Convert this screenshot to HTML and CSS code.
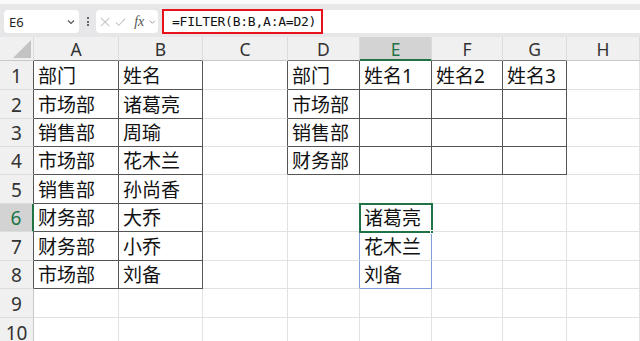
FILE: index.html
```html
<!DOCTYPE html>
<html lang="zh">
<head>
<meta charset="utf-8">
<link rel="stylesheet" href="styles.css">
</head>
<body>
<div class="topstrip"></div>
<div class="toolbar">
  <div class="namebox">
    <span class="name">E6</span>
    <svg class="chev" width="8" height="6" viewBox="0 0 8 6"><path d="M1 1.5 L4 4.5 L7 1.5" fill="none" stroke="#555" stroke-width="1.2"/></svg>
  </div>
  <div class="dots"><i></i><i></i><i></i></div>
  <div class="btns">
    <svg width="12" height="12" viewBox="0 0 12 12"><path d="M1 1 L11 11 M11 1 L1 11" stroke="#c4c4c4" stroke-width="1.2" fill="none"/></svg>
    <svg width="13" height="12" viewBox="0 0 13 12"><path d="M1 6.5 L4.5 10 L12 2" stroke="#c4c4c4" stroke-width="1.2" fill="none"/></svg>
    <span class="fx">fx</span>
    <svg width="8" height="6" viewBox="0 0 8 6"><path d="M1 1.5 L4 4.5 L7 1.5" fill="none" stroke="#999" stroke-width="1.1"/></svg>
  </div>
  <div class="fbar">
    <span class="formula">=FILTER(B:B,A:A=D2)</span>
  </div>
</div>
<div class="sheet">
  <div class="c corner"><svg width="20" height="20" viewBox="0 0 20 20"><path d="M19 1 L19 19 L1 19 Z" fill="#c3c3c3"/></svg></div>
  <div class="c hd tb">A</div><div class="c hd tb">B</div><div class="c hd">C</div><div class="c hd tb">D</div><div class="c hd selcol">E</div><div class="c hd tb">F</div><div class="c hd tb">G</div><div class="c hd">H</div>

  <div class="c rh tr">1</div><div class="c t">部门</div><div class="c t">姓名</div><div class="c tr"></div><div class="c t">部门</div><div class="c t">姓名1</div><div class="c t">姓名2</div><div class="c t">姓名3</div><div class="c"></div>

  <div class="c rh tr">2</div><div class="c t">市场部</div><div class="c t">诸葛亮</div><div class="c tr"></div><div class="c t">市场部</div><div class="c t"></div><div class="c t"></div><div class="c t"></div><div class="c"></div>

  <div class="c rh tr">3</div><div class="c t">销售部</div><div class="c t">周瑜</div><div class="c tr"></div><div class="c t">销售部</div><div class="c t"></div><div class="c t"></div><div class="c t"></div><div class="c"></div>

  <div class="c rh tr">4</div><div class="c t">市场部</div><div class="c t">花木兰</div><div class="c tr"></div><div class="c t">财务部</div><div class="c t"></div><div class="c t"></div><div class="c t"></div><div class="c"></div>

  <div class="c rh tr">5</div><div class="c t">销售部</div><div class="c t">孙尚香</div><div class="c"></div><div class="c"></div><div class="c"></div><div class="c"></div><div class="c"></div><div class="c"></div>

  <div class="c rh selrow">6</div><div class="c t">财务部</div><div class="c t">大乔</div><div class="c"></div><div class="c"></div><div class="c active">诸葛亮</div><div class="c"></div><div class="c"></div><div class="c"></div>

  <div class="c rh tr">7</div><div class="c t">财务部</div><div class="c t">小乔</div><div class="c"></div><div class="c bl"></div><div class="c spill">花木兰</div><div class="c"></div><div class="c"></div><div class="c"></div>

  <div class="c rh tr">8</div><div class="c t">市场部</div><div class="c t">刘备</div><div class="c"></div><div class="c bl"></div><div class="c spill end">刘备</div><div class="c"></div><div class="c"></div><div class="c"></div>

  <div class="c rh">9</div><div class="c"></div><div class="c"></div><div class="c"></div><div class="c"></div><div class="c"></div><div class="c"></div><div class="c"></div><div class="c"></div>

  <div class="c rh">10</div><div class="c"></div><div class="c"></div><div class="c"></div><div class="c"></div><div class="c"></div><div class="c"></div><div class="c"></div><div class="c"></div>
</div>
</body>
</html>
```
FILE: styles.css
```css
html, body {
  margin: 0;
  padding: 0;
  width: 640px;
  height: 341px;
  overflow: hidden;
  background: #fff;
  font-family: "Noto Sans", "Noto Sans CJK SC", sans-serif;
}

.topstrip {
  height: 4px;
  background: #fafafa;
}

.toolbar {
  height: 33px;
  box-sizing: border-box;
  padding: 6px 0 4px 4px;
  background: #e7e7e9;
  display: flex;
  align-items: stretch;
}

.namebox {
  width: 75px;
  background: #fff;
  border-radius: 4px;
  display: flex;
  align-items: center;
  justify-content: space-between;
  padding: 0 4px 0 5px;
  box-sizing: border-box;
}

.name {
  font-size: 13px;
  color: #222;
}

.dots {
  width: 17px;
  display: flex;
  flex-direction: column;
  align-items: center;
  justify-content: center;
  gap: 1.5px;
}

.dots i {
  display: block;
  width: 2px;
  height: 2px;
  background: #666;
}

.btns {
  width: 62px;
  background: #fff;
  border-radius: 4px;
  display: flex;
  align-items: center;
  padding: 0 2px 0 4px;
  box-sizing: border-box;
  gap: 5px;
}

.fx {
  font-family: "Liberation Serif", serif;
  font-style: italic;
  font-size: 14px;
  color: #555;
  margin-left: 3px;
}

.fbar {
  flex: 1;
  margin-left: 4px;
  background: #fff;
  border-radius: 3px 0 0 3px;
  display: flex;
  align-items: stretch;
}

.formula {
  width: 161px;
  margin: -1px 0;
  box-sizing: border-box;
  border: 2px solid #e8121a;
  padding-left: 8px;
  font-family: "DejaVu Sans Mono", monospace;
  font-size: 13px;
  letter-spacing: -0.24px;
  color: #111;
  display: flex;
  align-items: center;
}

.sheet {
  display: grid;
  grid-template-columns: 34px 85px 84px 85px 72px 72px 71px 64px 1fr;
  grid-template-rows: 24px 29px 29px 28px 28px 29px 28px 29px 28px 29px 29px;
}

.c {
  box-sizing: border-box;
  border-right: 1px solid #e2e2e2;
  border-bottom: 1px solid #e2e2e2;
  background: #fff;
  font-size: 19px;
  line-height: 1;
  color: #111;
  padding-left: 4px;
  padding-top: 2px;
  display: flex;
  align-items: center;
  white-space: nowrap;
}

.hd {
  background: #f0f0f0;
  border-right: 1px solid #dcdcdc;
  border-bottom: 1px solid #c8c8c8;
  justify-content: center;
  padding: 3px 0 0 0;
  font-size: 17.5px;
  color: #333;
}

.corner {
  background: #f0f0f0;
  border-right: 1px solid #dcdcdc;
  border-bottom: 1px solid #c8c8c8;
  padding: 0 1px 1px 0;
  align-items: flex-end;
  justify-content: flex-end;
}

.corner svg {
  display: block;
}

.rh {
  background: #f0f0f0;
  border-right: 1px solid #c8c8c8;
  border-bottom: 1px solid #dcdcdc;
  justify-content: center;
  padding: 2px 0 0 0;
  font-size: 19px;
  color: #333;
}

.t {
  border-right-color: #555;
  border-bottom-color: #555;
}

.tr {
  border-right-color: #555;
}

.tb {
  border-bottom-color: #777;
}

.selcol {
  background: #d3d3d3;
  color: #217346;
  border-bottom: 2px solid #217346;
}

.selrow {
  background: #d3d3d3;
  color: #217346;
  border-right: 2px solid #217346;
}

.active {
  position: relative;
  z-index: 2;
  outline: 2px solid #217346;
  outline-offset: -1px;
}

.active::after {
  content: "";
  position: absolute;
  right: -3px;
  bottom: -3px;
  width: 4px;
  height: 4px;
  background: #217346;
  border: 1px solid #fff;
  box-sizing: border-box;
}

.bl {
  border-right-color: #7f9fd6;
}

.spill {
  border-right-color: #7f9fd6;
}

.spill.end {
  border-bottom-color: #7f9fd6;
}
```
